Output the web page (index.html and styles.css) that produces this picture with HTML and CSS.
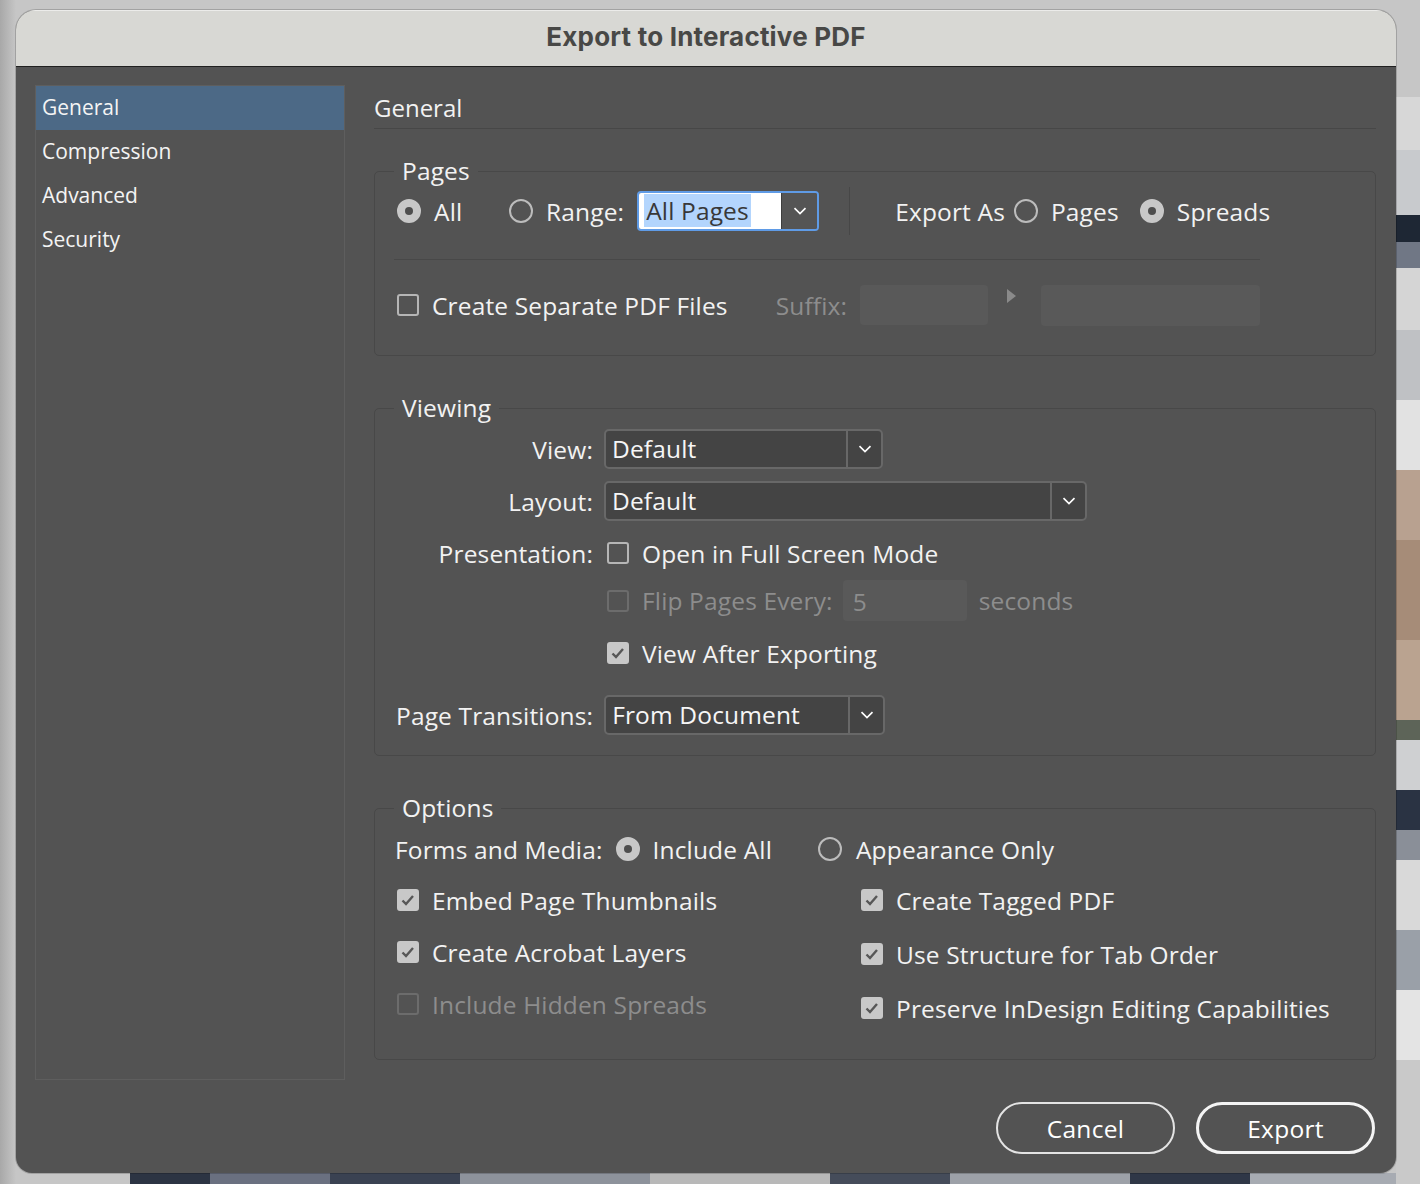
FILE: index.html
```html
<!DOCTYPE html>
<html lang="en">
<head>
<meta charset="utf-8">
<title>Export to Interactive PDF</title>
<link rel="stylesheet" href="styles.css">
</head>
<body>
<div class="dialog">
  <div class="titlebar">Export to Interactive PDF</div>
  <div class="content">
    <nav class="sidebar">
      <div class="nav-item active">General</div>
      <div class="nav-item">Compression</div>
      <div class="nav-item">Advanced</div>
      <div class="nav-item">Security</div>
    </nav>
    <main class="main">
      <h1 class="section-title">General</h1>

      <fieldset class="group group-pages">
        <legend>Pages</legend>
        <div class="pages-row">
          <label class="opt opt-all"><span class="radio on"></span><span>All</span></label>
          <label class="opt"><span class="radio"></span><span>Range:</span></label>
          <div class="combo">
            <div class="combo-field"><span class="sel">All Pages</span></div>
            <div class="combo-arrow"><svg width="14" height="8" viewBox="0 0 14 8"><path d="M1.5 1.2l5.5 5.3 5.5-5.3" fill="none" stroke="#fff" stroke-width="1.7"/></svg></div>
          </div>
          <div class="vsep"></div>
          <span class="export-as">Export As</span>
          <label class="opt opt-pages"><span class="radio"></span><span>Pages</span></label>
          <label class="opt opt-spreads"><span class="radio on"></span><span>Spreads</span></label>
        </div>
        <div class="separator"></div>
        <div class="suffix-row">
          <label class="opt opt-separate"><span class="check"></span><span>Create Separate PDF Files</span></label>
          <span class="dim suffix-label">Suffix:</span>
          <div class="field-disabled suffix-field"></div>
          <span class="tri"></span>
          <div class="field-disabled suffix-field2"></div>
        </div>
      </fieldset>

      <fieldset class="group group-viewing">
        <legend>Viewing</legend>
        <div class="vrow vrow-view">
          <span class="vlabel">View:</span>
          <div class="select select-view">
            <span class="select-value">Default</span>
            <span class="select-arrow"><svg width="14" height="8" viewBox="0 0 14 8"><path d="M1.5 1.2l5.5 5.3 5.5-5.3" fill="none" stroke="#fff" stroke-width="1.7"/></svg></span>
          </div>
        </div>
        <div class="vrow vrow-layout">
          <span class="vlabel">Layout:</span>
          <div class="select select-layout">
            <span class="select-value">Default</span>
            <span class="select-arrow"><svg width="14" height="8" viewBox="0 0 14 8"><path d="M1.5 1.2l5.5 5.3 5.5-5.3" fill="none" stroke="#fff" stroke-width="1.7"/></svg></span>
          </div>
        </div>
        <div class="vrow vrow-presentation">
          <span class="vlabel">Presentation:</span>
          <label class="opt opt-indent"><span class="check"></span><span>Open in Full Screen Mode</span></label>
        </div>
        <div class="vrow vrow-flip">
          <span class="vlabel"></span>
          <label class="opt opt-indent dim"><span class="check disabled"></span><span>Flip Pages Every:</span></label>
          <div class="field-disabled flip-field">5</div>
          <span class="dim seconds">seconds</span>
        </div>
        <div class="vrow vrow-after">
          <span class="vlabel"></span>
          <label class="opt opt-indent"><span class="check on"><svg width="22" height="22" viewBox="0 0 22 22"><path d="M5.5 11.5l3.5 3.5 7-8" fill="none" stroke="#575757" stroke-width="2.4"/></svg></span><span>View After Exporting</span></label>
        </div>
        <div class="trow">
          <span class="tlabel">Page Transitions:</span>
          <div class="select select-trans">
            <span class="select-value">From Document</span>
            <span class="select-arrow"><svg width="14" height="8" viewBox="0 0 14 8"><path d="M1.5 1.2l5.5 5.3 5.5-5.3" fill="none" stroke="#fff" stroke-width="1.7"/></svg></span>
          </div>
        </div>
      </fieldset>

      <fieldset class="group group-options">
        <legend>Options</legend>
        <div class="forms-row">
          <span class="forms-label">Forms and Media:</span>
          <label class="opt opt-include"><span class="radio on"></span><span>Include All</span></label>
          <label class="opt opt-appearance"><span class="radio"></span><span>Appearance Only</span></label>
        </div>
        <div class="opt-cols">
          <div class="col col-left">
            <label class="opt crow"><span class="check on"><svg width="22" height="22" viewBox="0 0 22 22"><path d="M5.5 11.5l3.5 3.5 7-8" fill="none" stroke="#575757" stroke-width="2.4"/></svg></span><span>Embed Page Thumbnails</span></label>
            <label class="opt crow"><span class="check on"><svg width="22" height="22" viewBox="0 0 22 22"><path d="M5.5 11.5l3.5 3.5 7-8" fill="none" stroke="#575757" stroke-width="2.4"/></svg></span><span>Create Acrobat Layers</span></label>
            <label class="opt crow dim"><span class="check disabled"></span><span>Include Hidden Spreads</span></label>
          </div>
          <div class="col col-right">
            <label class="opt crow"><span class="check on"><svg width="22" height="22" viewBox="0 0 22 22"><path d="M5.5 11.5l3.5 3.5 7-8" fill="none" stroke="#575757" stroke-width="2.4"/></svg></span><span>Create Tagged PDF</span></label>
            <label class="opt crow"><span class="check on"><svg width="22" height="22" viewBox="0 0 22 22"><path d="M5.5 11.5l3.5 3.5 7-8" fill="none" stroke="#575757" stroke-width="2.4"/></svg></span><span>Use Structure for Tab Order</span></label>
            <label class="opt crow"><span class="check on"><svg width="22" height="22" viewBox="0 0 22 22"><path d="M5.5 11.5l3.5 3.5 7-8" fill="none" stroke="#575757" stroke-width="2.4"/></svg></span><span>Preserve InDesign Editing Capabilities</span></label>
          </div>
        </div>
      </fieldset>

      <div class="actions">
        <button class="btn">Cancel</button>
        <button class="btn btn-primary">Export</button>
      </div>
    </main>
  </div>
</div>
</body>
</html>
```

FILE: styles.css
```css
* { box-sizing: border-box; }

html, body { margin: 0; }

body {
  width: 1420px;
  height: 1184px;
  overflow: hidden;
  padding: 10px 0 0 16px;
  font-family: "Open Sans", "DejaVu Sans", sans-serif;
  color: #f2f2f2;
  background:
    linear-gradient(to bottom,
      #c6c6c6 0 97px, #d7d7d7 97px 150px, #c8cacd 150px 215px, #1e2734 215px 242px,
      #707785 242px 268px, #d5d5d5 268px 330px, #bfc1c4 330px 400px, #e2e2e2 400px 470px,
      #b8a190 470px 540px, #a68c78 540px 640px, #baa390 640px 720px, #5d6458 720px 740px,
      #cfd0d2 740px 790px, #2a3343 790px 830px, #8a8f98 830px 860px, #d9d9d9 860px 930px,
      #9aa0a8 930px 990px, #e4e4e4 990px 1060px, #c9c9c9 1060px 1184px)
      right top / 24px 100% no-repeat,
    linear-gradient(to right,
      #2c3443 0 80px, #6a7080 80px 200px, #3a4252 200px 330px, #8d929b 330px 520px,
      #b8b8b8 520px 700px, #454c5a 700px 820px, #9da1a8 820px 1000px, #2f3747 1000px 1120px,
      #a7abb2 1120px 1290px)
      130px bottom / 1290px 11px no-repeat,
    linear-gradient(to right, #a8a8a8, #c6c6c6 16px);
}

/* ---------- dialog shell ---------- */
.dialog {
  width: 1380px;
  height: 1163px;
  background: #535353;
  border-radius: 20px 20px 16px 16px;
  overflow: hidden;
  box-shadow: 0 0 0 1px rgba(0, 0, 0, 0.18);
}

.titlebar {
  height: 57px;
  background: #d8d8d4;
  border-top: 1px solid #ececea;
  border-bottom: 1px solid #202020;
  color: #484846;
  font-family: "Inter", "Liberation Sans", sans-serif;
  font-weight: 700;
  font-size: 26px;
  letter-spacing: 0.2px;
  line-height: 52px;
  text-align: center;
}

.content {
  display: grid;
  grid-template-columns: 310px 1fr;
  column-gap: 29px;
  padding: 18px 20px 0 19px;
}

/* ---------- sidebar ---------- */
.sidebar {
  height: 995px;
  border: 1px solid #5e5e5e;
}

.nav-item {
  height: 44px;
  line-height: 43px;
  padding-left: 6px;
  font-size: 21px;
  color: #f4f4f4;
}

.nav-item.active {
  background: #4c6986;
}

/* ---------- main ---------- */
.main {
  min-width: 0;
  font-size: 24.5px;
  letter-spacing: 0.15px;
}

.section-title {
  margin: 0;
  height: 44px;
  padding-top: 3px;
  font-size: 24px;
  font-weight: 400;
  letter-spacing: 0;
  line-height: 40px;
  border-bottom: 1px solid #474747;
}

.group {
  margin: 0;
  padding: 0 19px;
  min-inline-size: 0;
  border: 1px solid #484848;
  border-radius: 5px;
}

.group legend {
  padding: 0 8px;
  font-size: 24.5px;
  line-height: 30px;
}

.group-pages { margin-top: 27px; padding-bottom: 29px; }
.group-viewing { margin-top: 37px; padding-bottom: 20px; }
.group-options { margin-top: 37px; padding-bottom: 31px; }

.opt {
  display: flex;
  align-items: center;
  gap: 13px;
  white-space: nowrap;
}

.dim { color: #8d8d8d; }

/* radios & checks */
.radio {
  flex: none;
  width: 24px;
  height: 24px;
  border-radius: 50%;
  border: 2px solid #bcbcbc;
  display: grid;
  place-items: center;
}

.radio.on {
  background: #c8c8c8;
  border-color: #c8c8c8;
}

.radio.on::after {
  content: "";
  width: 8px;
  height: 8px;
  border-radius: 50%;
  background: #4e4e4e;
}

.check {
  flex: none;
  width: 22px;
  height: 22px;
  border: 2px solid #b6b6b6;
  border-radius: 3px;
  display: grid;
  place-items: center;
}

.check svg { margin: -2px; }

.check.on {
  background: #c8c8c8;
  border-color: #c8c8c8;
}

.check.disabled { border-color: #6c6c6c; }

/* ---------- pages group ---------- */
.pages-row {
  display: flex;
  align-items: center;
  height: 48px;
  margin-top: 1px;
}

.opt-all { width: 112px; margin-left: 3px; }

.combo {
  display: flex;
  width: 182px;
  height: 40px;
  margin-left: 13px;
  border: 2px solid #5f9be6;
  border-radius: 4px;
  overflow: hidden;
}

.combo-field {
  flex: 1;
  background: #ffffff;
  padding: 2px 0 0 5px;
  line-height: 32px;
  color: #383838;
  border-right: 1px solid #3e3e3e;
  white-space: nowrap;
  overflow: hidden;
}

.combo-field .sel {
  background: #b3d5fd;
  padding: 0 2px;
}

.combo-arrow {
  width: 35px;
  flex: none;
  background: #555555;
  display: grid;
  place-items: center;
}

.vsep {
  width: 1px;
  height: 48px;
  margin-left: 30px;
  background: #474747;
}

.export-as {
  margin-left: 45px;
}

.opt-pages { margin-left: 9px; }
.opt-spreads { margin-left: 21px; }

.separator {
  width: 866px;
  height: 1px;
  margin-top: 24px;
  background: #484848;
}

.suffix-row {
  display: flex;
  align-items: center;
  height: 42px;
  margin-top: 24px;
}

.opt-separate { margin-left: 3px; }

.suffix-label {
  margin-left: 48px;
}

.field-disabled {
  background: #595959;
  border-radius: 4px;
}

.suffix-field {
  width: 128px;
  height: 40px;
  margin-left: 13px;
}

.tri {
  align-self: flex-start;
  margin: 5px 0 0 19px;
  width: 0;
  height: 0;
  border-top: 7px solid transparent;
  border-bottom: 7px solid transparent;
  border-left: 9px solid #8a8a8a;
}

.suffix-field2 {
  width: 219px;
  height: 41px;
  margin-left: 25px;
}

/* ---------- viewing group ---------- */
.vrow {
  display: grid;
  grid-template-columns: 199px auto auto auto;
  justify-content: start;
  align-items: center;
  column-gap: 11px;
  height: 40px;
  margin-top: 12px;
}

.vrow-view { margin-top: 6px; }
.vrow-flip { height: 41px; margin-top: 7px; }

.vlabel {
  text-align: right;
}

.opt-indent { margin-left: 3px; }

.select {
  display: flex;
  height: 40px;
  background: #444444;
  border: 2px solid #686868;
  border-radius: 5px;
}

.select-view { width: 279px; }
.select-layout { width: 483px; }
.select-trans { width: 281px; }

.select-value {
  flex: 1;
  padding-left: 6px;
  line-height: 36px;
  color: #f6f6f6;
}

.select-arrow {
  width: 35px;
  border-left: 2px solid #686868;
  display: grid;
  place-items: center;
}

.flip-field {
  width: 124px;
  height: 41px;
  margin-left: -1px;
  padding-left: 10px;
  line-height: 43px;
  color: #8d8d8d;
}

.seconds {
  margin-left: 1px;
}

.trow {
  display: flex;
  align-items: center;
  gap: 11px;
  height: 40px;
  margin-top: 22px;
}

.tlabel {
  margin-left: 2px;
}

/* ---------- options group ---------- */
.forms-row {
  display: flex;
  align-items: center;
  height: 40px;
  margin-top: 6px;
}

.forms-label {
  margin-left: 1px;
}

.opt-include { margin-left: 13px; }
.opt-appearance { margin-left: 46px; gap: 14px; }

.opt-cols {
  display: grid;
  grid-template-columns: 467px auto;
  margin-top: 11px;
}

.col {
  display: flex;
  flex-direction: column;
}

.col-left { gap: 12px; padding-left: 3px; }
.col-right { gap: 14px; }

.crow { height: 40px; }

/* ---------- actions ---------- */
.actions {
  display: flex;
  justify-content: flex-end;
  gap: 21px;
  margin-top: 42px;
  padding-right: 1px;
}

.btn {
  width: 179px;
  height: 52px;
  border: 2px solid #e4e4e4;
  border-radius: 26px;
  background: transparent;
  color: #ffffff;
  font-family: "Open Sans", "DejaVu Sans", sans-serif;
  font-size: 24.5px;
  letter-spacing: 0.3px;
  padding: 0;
}

.btn-primary {
  border-width: 3px;
  border-color: #f4f4f4;
}
```
